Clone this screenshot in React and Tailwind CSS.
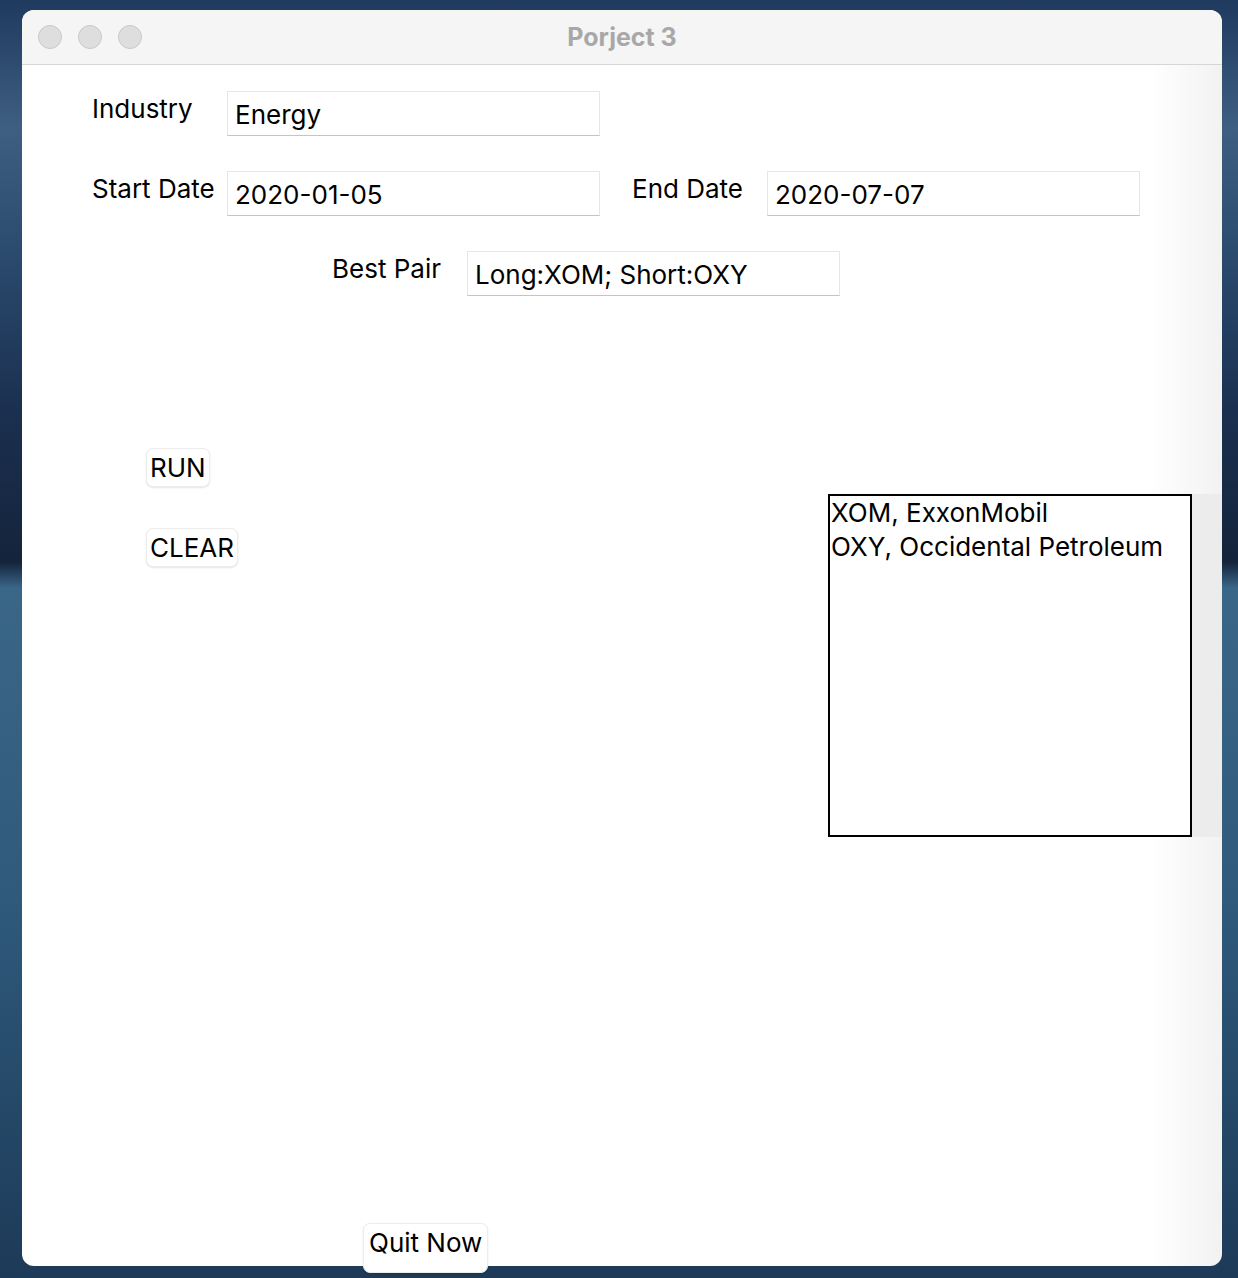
import React from 'react';

const font = { fontFamily: 'Inter, "Noto Sans", sans-serif' };

function Field({ label, value }) {
    return (
        <div className="flex items-start">
            <div className="w-[135px] mt-[3px] leading-[30px] text-[26px] text-black">{label}</div>
            <div className="w-[373px] h-[45px] bg-white border border-[#e6e6e6] border-b-[#c4c4c4] px-[7px] text-[26px] leading-[46px] text-black">
                {value}
            </div>
        </div>
    );
}

function MacButton({ children, className = '' }) {
    return (
        <button
            className={`bg-white rounded-[7px] border border-[#ececec] shadow-[0_1px_2px_rgba(0,0,0,0.10)] px-[3px] text-[26px] h-[39px] text-black ${className}`}
        >
            {children}
        </button>
    );
}

export default function App() {
    return (
        <div
            className="w-[1238px] h-[1278px] overflow-hidden pt-[10px] pl-[22px] bg-[linear-gradient(180deg,#1f3a5e_0%,#3e5f82_10%,#2a4a6e_20%,#1b3050_32%,#14243b_44%,#3a6688_46%,#2f5a7c_70%,#1d3a58_100%)]"
            style={font}
        >
            <div className="w-[1200px] h-[1256px] rounded-[12px] flex flex-col bg-[linear-gradient(90deg,#ffffff_0%,#ffffff_94%,#f2f2f2_100%)]">
                {/* title bar */}
                <div className="h-[55px] shrink-0 rounded-t-[12px] bg-[#f5f5f5] border-b border-[#d6d6d6] grid grid-cols-[1fr_auto_1fr] items-center">
                    <div className="flex items-center gap-[16px] pl-[16px]">
                        <span className="w-[24px] h-[24px] rounded-full bg-[#dedede] border border-[#c9c9c9]" />
                        <span className="w-[24px] h-[24px] rounded-full bg-[#dedede] border border-[#c9c9c9]" />
                        <span className="w-[24px] h-[24px] rounded-full bg-[#dedede] border border-[#c9c9c9]" />
                    </div>
                    <div className="text-[25px] font-bold text-[#a8a8a8] leading-none">Porject 3</div>
                    <div />
                </div>

                {/* form */}
                <div className="pt-[26px] pl-[70px] flex flex-col gap-[35px]">
                    <Field label="Industry" value="Energy" />
                    <div className="flex items-start gap-[32px]">
                        <Field label="Start Date" value="2020-01-05" />
                        <Field label="End Date" value="2020-07-07" />
                    </div>
                    <div className="pl-[240px]">
                        <Field label="Best Pair" value="Long:XOM; Short:OXY" />
                    </div>
                </div>

                {/* buttons + listbox */}
                <div className="mt-[152px] flex items-start">
                    <div className="w-[806px] pl-[124px] flex flex-col items-start gap-[41px]">
                        <MacButton className="leading-[37px]">RUN</MacButton>
                        <MacButton className="leading-[37px]">CLEAR</MacButton>
                    </div>
                    <div className="mt-[46px] flex">
                        <div className="w-[364px] h-[343px] border-2 border-black bg-white text-[26px] leading-[34px] text-black pl-px">
                            <div>XOM, ExxonMobil</div>
                            <div>OXY, Occidental Petroleum</div>
                        </div>
                        <div className="w-[30px] h-[343px] bg-[#ececec]" />
                    </div>
                </div>

                <div className="mt-[386px] pl-[341px]">
                    <MacButton className="h-[50px] leading-[36px] px-[5px] pb-[10px]">Quit Now</MacButton>
                </div>
            </div>
        </div>
    );
}
